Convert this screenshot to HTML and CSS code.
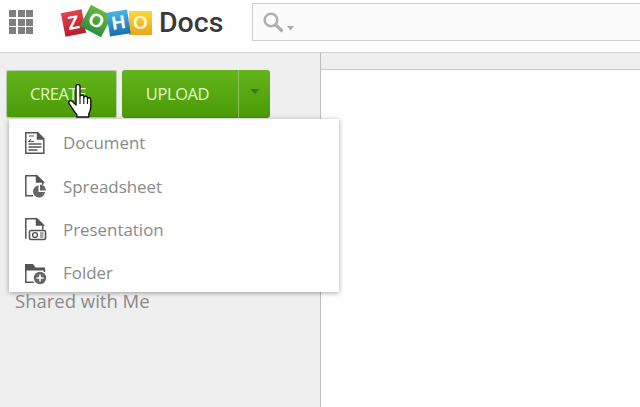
FILE: index.html
```html
<!DOCTYPE html>
<html lang="en">
<head>
<meta charset="utf-8">
<title>Zoho Docs</title>
<link rel="stylesheet" href="styles.css">
</head>
<body>
<header class="topbar">
  <div class="apps" aria-label="Apps">
    <i></i><i></i><i></i><i></i><i></i><i></i><i></i><i></i><i></i>
  </div>
  <div class="logo">
    <span class="tile tile-z">Z</span>
    <span class="tile tile-o">O</span>
    <span class="tile tile-h">H</span>
    <span class="tile tile-y">O</span>
  </div>
  <div class="product">Docs</div>
  <div class="search">
    <svg class="search-icon" width="32" height="24" viewBox="0 0 32 24">
      <circle cx="8" cy="10" r="6.300" fill="none" stroke="#b0b0b0" stroke-width="2.600"/>
      <path d="M13 15l5.500 5.500" stroke="#b0b0b0" stroke-width="3.200" stroke-linecap="round"/>
      <path d="M24 16h7l-3.500 4.500z" fill="#aaa"/>
    </svg>
  </div>
</header>
<div class="workspace">
  <aside class="sidebar">
    <div class="actions">
      <button class="btn btn-create">CREATE</button>
      <div class="btn btn-upload">
        <span class="upload-label">UPLOAD</span>
        <span class="upload-arrow"></span>
      </div>
    </div>
    <div class="shared">Shared with Me</div>
  </aside>
  <main class="content"></main>
</div>

<div class="menu">
  <div class="menu-item">
    <svg class="menu-icon" width="24" height="24" viewBox="0 0 24 24" fill="none" stroke="#555" stroke-width="1.500">
      <path d="M2.800 1.800h12l6 6v14.400h-18z"/>
      <path d="M14.500 2v6h6.200" fill="#555"/>
      <path d="M6 5h5M8 8l-2 2.500h5" stroke-width="1.200"/>
      <path d="M5.500 13h13M5.500 16h13M5.500 19h9" stroke-width="1.300"/>
    </svg>
    <span>Document</span>
  </div>
  <div class="menu-item">
    <svg class="menu-icon" width="24" height="24" viewBox="0 0 24 24" fill="none" stroke="#555" stroke-width="1.500">
      <path d="M10 21.800h-7.200v-20h11l6 6v3"/>
      <path d="M13.500 2l6.500 6h-6.500z" fill="#555"/>
      <path d="M15.500 11.500a6 6 0 1 0 6.500 6.500h-6.500z" fill="#666" stroke="none"/>
      <path d="M17 10.500a6 6 0 0 1 6 6h-6z" fill="#666" stroke="none"/>
    </svg>
    <span>Spreadsheet</span>
  </div>
  <div class="menu-item">
    <svg class="menu-icon" width="24" height="24" viewBox="0 0 24 24" fill="none" stroke="#555" stroke-width="1.500">
      <path d="M2.800 21.800v-20h11l6 6v5"/>
      <path d="M13.500 2l6.500 6h-6.500z" fill="#555"/>
      <rect x="6.500" y="13.500" width="16" height="9" rx="1.500" fill="#fff" stroke-width="1.600"/>
      <circle cx="12" cy="18" r="2.400" fill="none" stroke-width="1.400"/>
      <path d="M17 16h3.500M17 18h3.500M17 20h3.500" stroke-width="1.100"/>
    </svg>
    <span>Presentation</span>
  </div>
  <div class="menu-item">
    <svg class="menu-icon" width="24" height="24" viewBox="0 0 24 24" fill="none" stroke="#555" stroke-width="1.500">
      <path d="M2 6.500v-3.500h8l2.500 3.500h9.500v3h-20z" fill="#555" stroke="none"/>
      <path d="M2.800 8v13.200h8"/>
      <path d="M21.500 8v3"/>
      <circle cx="17" cy="17" r="6.200" fill="#666" stroke="none"/>
      <path d="M17 13.500v7M13.500 17h7" stroke="#fff" stroke-width="1.600"/>
    </svg>
    <span>Folder</span>
  </div>
</div>

<svg class="cursor" width="26" height="36" viewBox="0 0 26 36">
  <path d="M8 2.500c0-2.600 4-2.600 4 0v10c.3-2 3.600-2 3.800 0v1c.4-1.800 3.400-1.700 3.700.2v1c.5-1.500 3.200-1.300 3.300.8v7.500c0 3-1 5-2 7v3h-12v-2.500c-2-2-5-7-7.500-10.500-1.800-2.500 1.200-4.500 3.200-2.500l3.500 3.500z" fill="#fff" stroke="#111" stroke-width="1.400" stroke-linejoin="round"/>
  <path d="M12 13v7M15.800 14v6M19.500 15v5" stroke="#111" stroke-width="1.100"/>
</svg>
</body>
</html>
```
FILE: styles.css
```css
* { box-sizing: border-box; }
html, body { margin: 0; height: 100%; overflow: hidden; }
body {
  width: 640px;
  height: 407px;
  position: relative;
  display: flex;
  flex-direction: column;
  background: #fff;
  font-family: "Open Sans", "Liberation Sans", sans-serif;
}
.topbar {
  height: 53px;
  flex: none;
  display: flex;
  align-items: flex-start;
  background: #fff;
  border-bottom: 1px solid #d4d4d4;
}
.apps {
  width: 24px;
  margin: 10px 0 0 9px;
  display: grid;
  grid-template-columns: repeat(3, 7px);
  grid-auto-rows: 7px;
  gap: 1.500px;
}
.apps i { background: #7f7f7f; }
.logo {
  margin: 8px 0 0 30px;
  display: flex;
  align-items: flex-start;
  width: 90px;
  flex: none;
}
.tile {
  display: flex;
  align-items: center;
  justify-content: center;
  font: bold 19px "Liberation Sans", sans-serif;
  color: #fff;
}
.tile-z {
  width: 21px; height: 24px; margin: 3px 0 0 0;
  background: linear-gradient(#e8414a, #b71c2c);
  transform: rotate(-11deg);
}
.tile-o {
  width: 24px; height: 24px; margin: 1px 0 0 0;
  background: linear-gradient(#69b93c, #2f8f3c);
  transform: rotate(28deg);
}
.tile-h {
  width: 21px; height: 24px; margin: 3px 0 0 0;
  background: linear-gradient(#4cb4e6, #1670b4);
  transform: rotate(-9deg);
}
.tile-y {
  width: 23px; height: 24px; margin: 3px 0 0 0;
  background: linear-gradient(#fbd93a, #eba51c);
  color: #fff7c8;
}
.product {
  margin: 5px 0 0 6px;
  width: 93px;
  flex: none;
  font-family: "Roboto", "Open Sans", sans-serif;
  font-weight: 500;
  font-size: 28.500px;
  line-height: 36px;
  color: #3a3a3a;
}
.search {
  flex: 1;
  height: 38px;
  margin-top: 3px;
  background: #fbfbfb;
  border: 1px solid #cfcfcf;
  border-right: 0;
  padding: 6px 0 0 10px;
}
.search-icon { display: block; }
.workspace {
  flex: 1;
  display: flex;
  background: #efefef;
}
.sidebar {
  width: 321px;
  flex: none;
  padding: 17px 0 0 6px;
  border-right: 1px solid #bdbdbd;
  display: flex;
  flex-direction: column;
}
.actions { display: flex; gap: 5px; }
.btn {
  height: 48px;
  border: 0;
  padding: 0;
  border-radius: 3px;
  background: linear-gradient(#64b51c, #4a9a08);
  color: #e4f7c8;
  font: 16.500px/48px "Open Sans", "Liberation Sans", sans-serif;
  letter-spacing: -0.4px;
}
.btn-create { width: 111px; text-align: left; padding-left: 24px; box-shadow: 0 0 0 1px #b9c9a8 inset; }
.btn-upload { width: 148px; display: flex; }
.upload-label { width: 116px; padding-right: 5px; text-align: center; }
.upload-arrow {
  flex: 1;
  border-left: 1px solid #8fc066;
  position: relative;
}
.upload-arrow::after {
  content: "";
  position: absolute;
  left: 11px;
  top: 19px;
  border: 5px solid transparent;
  border-top: 5px solid #3c7a0c;
  border-bottom: 0;
}
.shared {
  margin: 171px 0 0 9px;
  font-size: 18.500px;
  line-height: 24px;
  color: #8a8a8a;
}
.content {
  flex: 1;
  margin-top: 16px;
  background: #fff;
  border-top: 1px solid #c8c8c8;
}
.menu {
  position: absolute;
  left: 9px;
  top: 119px;
  width: 330px;
  height: 173px;
  background: #fff;
  box-shadow: 0 1px 5px rgba(0, 0, 0, 0.35);
  padding-top: 3px;
}
.menu-item {
  height: 43.400px;
  display: flex;
  align-items: center;
  color: #8a8a8a;
  font-size: 16.900px;
  position: relative;
  top: -1px;
}
.menu-icon { margin: 0 16px 0 14px; flex: none; }
.cursor { position: absolute; left: 68px; top: 84px; }
```
